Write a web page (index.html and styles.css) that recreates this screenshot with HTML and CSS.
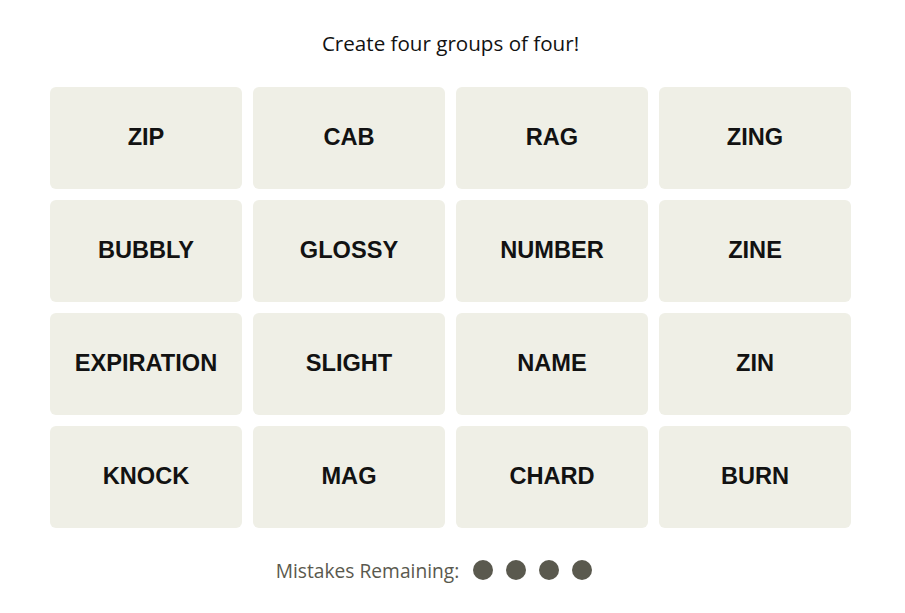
FILE: index.html
```html
<!DOCTYPE html>
<html>
<head>
<meta charset="utf-8">
<link rel="stylesheet" href="styles.css">
</head>
<body>
<main class="game">
  <p class="title">Create four groups of four!</p>
  <div class="board">
    <button class="tile">ZIP</button>
    <button class="tile">CAB</button>
    <button class="tile">RAG</button>
    <button class="tile">ZING</button>
    <button class="tile">BUBBLY</button>
    <button class="tile">GLOSSY</button>
    <button class="tile">NUMBER</button>
    <button class="tile">ZINE</button>
    <button class="tile">EXPIRATION</button>
    <button class="tile">SLIGHT</button>
    <button class="tile">NAME</button>
    <button class="tile">ZIN</button>
    <button class="tile">KNOCK</button>
    <button class="tile">MAG</button>
    <button class="tile">CHARD</button>
    <button class="tile">BURN</button>
  </div>
  <div class="mistakes">
    <span class="mistakes-label">Mistakes Remaining:</span>
    <span class="dots">
      <span class="dot"></span>
      <span class="dot"></span>
      <span class="dot"></span>
      <span class="dot"></span>
    </span>
  </div>
</main>
</body>
</html>
```
FILE: styles.css
```css
html, body {
  margin: 0;
  padding: 0;
  background: #ffffff;
}
.game {
  width: 801px;
  margin: 0 0 0 50px;
  font-family: "Liberation Sans", Arial, sans-serif;
}
.title {
  margin: 0;
  padding-top: 30px;
  height: 87px;
  box-sizing: border-box;
  text-align: center;
  font-family: "Open Sans", "Liberation Sans", sans-serif;
  font-size: 20.6px;
  line-height: 26px;
  color: #121212;
}
.board {
  display: grid;
  grid-template-columns: repeat(4, 192px);
  grid-auto-rows: 102px;
  gap: 11px;
}
.tile {
  border: none;
  border-radius: 6px;
  background: #efefe6;
  color: #121212;
  font-family: "Liberation Sans", Arial, sans-serif;
  font-weight: 700;
  font-size: 23.6px;
  padding: 0 0 2px;
  text-transform: uppercase;
}
.mistakes {
  display: flex;
  align-items: center;
  justify-content: center;
  gap: 14px;
  margin-top: 29px;
  height: 26px;
  padding-right: 33px;
}
.mistakes-label {
  font-family: "Open Sans", "Liberation Sans", sans-serif;
  font-size: 19.2px;
  color: #5a594e;
}
.dots {
  display: flex;
  gap: 13px;
}
.dot {
  width: 20px;
  height: 20px;
  border-radius: 50%;
  background: #5a594e;
}
```
